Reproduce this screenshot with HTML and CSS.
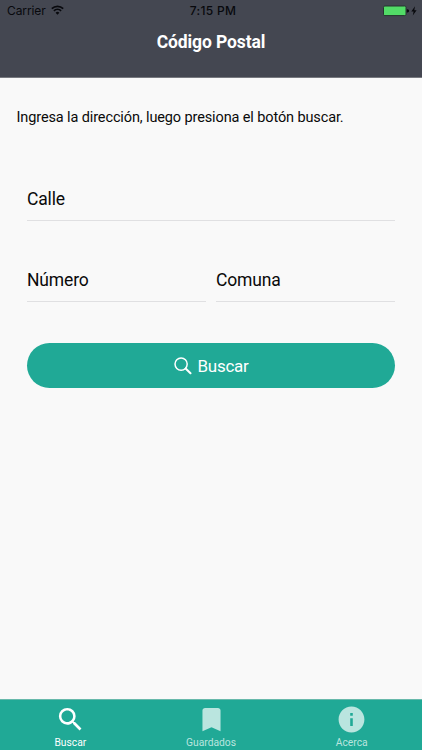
FILE: index.html
```html
<!DOCTYPE html>
<html lang="es">
<head>
<meta charset="utf-8">
<meta name="viewport" content="width=device-width, initial-scale=1">
<title>Código Postal</title>
<link rel="stylesheet" href="styles.css">
</head>
<body>
<div class="app">
  <header class="header">
    <div class="status">
      <div class="status-left">
        <span>Carrier</span>
        <svg class="wifi" viewBox="0 0 13 10" fill="none" stroke="#08090d" stroke-width="1.7"><path d="M.8 3.6a8.2 8.2 0 0 1 11.4 0M2.9 5.9a5.2 5.2 0 0 1 7.2 0"/><path d="M6.5 9.7 4.6 7.7a2.7 2.7 0 0 1 3.8 0z" fill="#08090d" stroke="none"/></svg>
      </div>
      <span class="time">7:15 PM</span>
      <div class="status-right">
        <svg class="battery" viewBox="0 0 34 12"><rect x=".5" y="1" width="22.5" height="9.6" rx="1.3" fill="#52dc67" stroke="#25352f"/><path d="M23.8 4.2h.7a1.3 1.3 0 0 1 0 3.2h-.7z" fill="#08090d"/><path d="M32 1.2 28.3 6.4h2.3l-.8 4.1 3.8-5.3h-2.3z" fill="#08090d"/></svg>
      </div>
    </div>
    <h1 class="title">Código Postal</h1>
  </header>
  <main class="content">
    <p class="intro">Ingresa la dirección, luego presiona el botón buscar.</p>
    <div class="form">
      <div class="field">Calle</div>
      <div class="row">
        <div class="field">Número</div>
        <div class="field">Comuna</div>
      </div>
      <button class="button" type="button">
        <svg class="button-icon" viewBox="0 0 18 18" fill="none" stroke="#fff"><circle cx="7.1" cy="7.1" r="6.1" stroke-width="1.5"/><path d="m11.6 11.6 4.9 4.6" stroke-width="2.1" stroke-linecap="round"/></svg>
        <span>Buscar</span>
      </button>
    </div>
  </main>
  <nav class="tabs">
    <a class="tab active">
      <svg class="tab-icon" viewBox="0 0 24 24" fill="currentColor"><path d="M15.5 14h-.79l-.28-.27A6.47 6.47 0 0 0 16 9.5 6.5 6.5 0 1 0 9.5 16c1.61 0 3.09-.59 4.23-1.57l.27.28v.79l5 4.99L20.49 19l-4.99-5zm-6 0C7.01 14 5 11.99 5 9.5S7.01 5 9.5 5 14 7.01 14 9.5 11.99 14 9.5 14z"/></svg>
      <span>Buscar</span>
    </a>
    <a class="tab">
      <svg class="tab-icon" viewBox="0 0 24 24" fill="currentColor"><path d="M17 3H7c-1.1 0-2 .9-2 2v16l7-3 7 3V5c0-1.1-.9-2-2-2z"/></svg>
      <span>Guardados</span>
    </a>
    <a class="tab">
      <svg class="tab-icon" viewBox="0 0 24 24" fill="currentColor"><path d="M12 2C6.48 2 2 6.48 2 12s4.48 10 10 10 10-4.48 10-10S17.52 2 12 2zm1 15h-2v-6h2v6zm0-8h-2V7h2v2z"/></svg>
      <span>Acerca</span>
    </a>
  </nav>
</div>
</body>
</html>
```
FILE: styles.css
```css
* { box-sizing: border-box; }
body { margin: 0; font-family: Roboto, sans-serif; color: #0a0a0a; }
.app { height: 750px; display: flex; flex-direction: column; background: #f9f9f9; overflow: hidden; }
.header { height: 78px; background: #444751; border-bottom: 1px solid #77797f; }
.status { height: 22px; padding: 0 5px 0 7px; display: grid; grid-template-columns: 1fr auto 1fr; align-items: center; font: 12px/22px Inter, sans-serif; color: #08090d; }
.status-left { display: flex; align-items: center; gap: 5px; }
.status-left span { letter-spacing: -.1px; }
.wifi { width: 13px; height: 10px; margin-top: -2px; }
.time { font-weight: 500; letter-spacing: .3px; padding-left: 2px; }
.status-right { display: flex; justify-content: flex-end; }
.battery { width: 34px; height: 12px; margin-top: -1px; }
.title { margin: 9px 0 0; font-size: 17.5px; line-height: 23px; font-weight: 700; letter-spacing: -.1px; text-align: center; color: #fff; }
.content { flex: 1; padding: 28px 16px 0; }
.intro { margin: 0; padding-left: .5px; font-size: 14.5px; line-height: 23px; letter-spacing: -.12px; }
.form { padding: 47px 11px 0; }
.field { flex: 1; height: 45px; border-bottom: 1px solid #e0e0e2; font-size: 17.5px; line-height: 47px; letter-spacing: -.15px; }
.row { display: flex; gap: 10px; margin-top: 36px; }
.button { width: 100%; height: 45px; margin: 41px 0 0; padding: 0; border: 0; border-radius: 23px; display: flex; align-items: center; justify-content: center; gap: 6px; background: #20a996; color: #fff; font: 17px/44px Roboto, sans-serif; letter-spacing: -.3px; }
.button-icon { width: 18px; height: 18px; }
.tabs { height: 51px; display: flex; background: #20a996; border-top: 1px solid #68b9ab; }
.tab { flex: 1; display: flex; flex-direction: column; align-items: center; font-size: 10.3px; line-height: 15px; color: #bae5df; padding-top: 4px; }
.active { color: #fff; }
.tab-icon { flex: none; width: 31px; height: 31px; }
```
